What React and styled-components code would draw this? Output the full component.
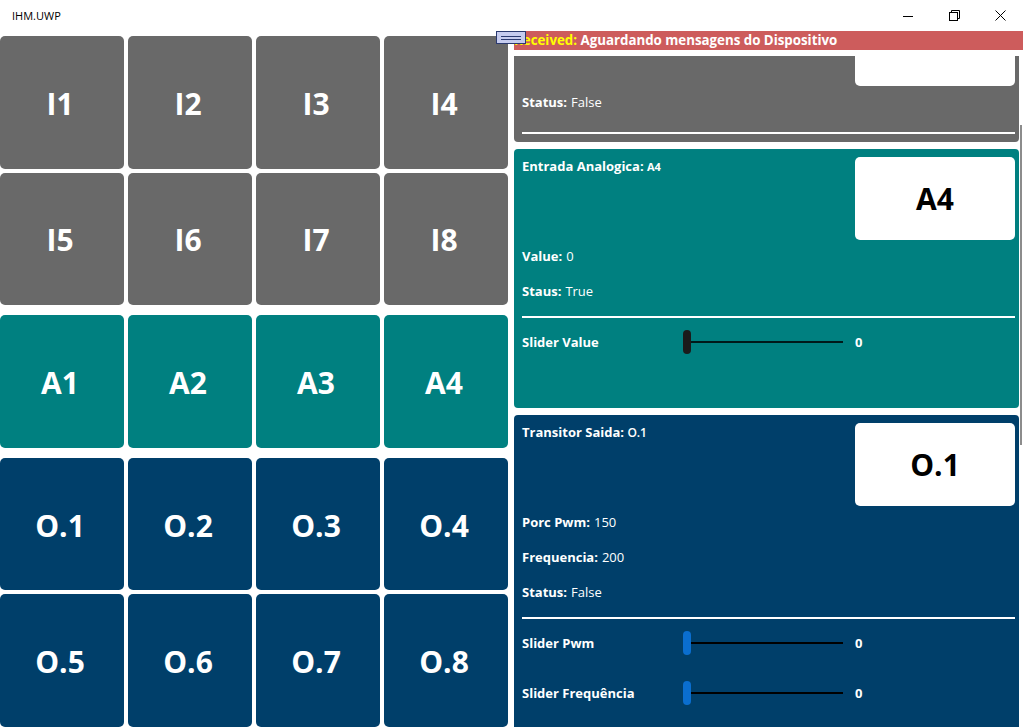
import React, { useLayoutEffect, useRef } from "react";
import styled, { createGlobalStyle } from "styled-components";

const GlobalStyle = createGlobalStyle`
  html, body { margin: 0; padding: 0; background: #ffffff; overflow: hidden; }
  body { font-family: "Open Sans", "Noto Sans", sans-serif; }
  * { box-sizing: border-box; }
`;

const COLORS = {
  gray: "#696969",
  teal: "#008080",
  navy: "#003F6A",
};

const Window = styled.div`
  width: 100vw;
  height: 100vh;
  display: flex;
  flex-direction: column;
  background: #ffffff;
`;

const TitleBar = styled.div`
  height: 31px;
  flex: none;
  display: flex;
  align-items: center;
  justify-content: space-between;
`;

const AppTitle = styled.span`
  font-size: 11px;
  color: #000;
  padding-left: 12px;
`;

const Controls = styled.div`
  display: flex;
  height: 100%;
`;

const ControlButton = styled.div`
  width: 46px;
  height: 100%;
  display: flex;
  align-items: center;
  justify-content: center;
  svg { display: block; }
`;

const Content = styled.div`
  position: relative;
  flex: 1;
  min-height: 0;
  display: flex;
  overflow: hidden;
`;

const TileColumn = styled.div`
  width: 508px;
  flex: none;
  padding-top: 5px;
  display: flex;
  flex-direction: column;
  gap: 10px;
`;

const TileGroup = styled.div`
  display: grid;
  grid-template-columns: repeat(4, 1fr);
  grid-auto-rows: 132.6px;
  gap: 4px;
`;

const Tile = styled.div`
  background: ${(p) => COLORS[p.$tone]};
  border-radius: 5px;
  display: flex;
  align-items: center;
  justify-content: center;
  color: #ffffff;
  font-weight: 700;
  font-size: 30px;
  padding-left: ${(p) => (p.$tone === "gray" ? "0" : "0")};
  margin-left: 0;
`;

const TileLabel = styled.span`
  margin-left: -4px;
  margin-top: 2px;
`;

const Splitter = styled.div`
  position: absolute;
  left: 496px;
  top: 0;
  width: 30px;
  height: 13px;
  background: #c6ccef;
  border: 1px solid #2b3a70;
  display: flex;
  flex-direction: column;
  justify-content: center;
  gap: 2px;
  padding: 0 4px;
  z-index: 5;
`;

const SplitterLine = styled.div`
  height: 1px;
  background: #2b3a70;
`;

const RightPanel = styled.div`
  position: relative;
  flex: 1;
  min-width: 0;
  margin-left: 6px;
  display: flex;
  flex-direction: column;
  gap: 6px;
`;

const ReceivedBar = styled.div`
  height: 19px;
  flex: none;
  background: #cd5c5c;
  color: #ffffff;
  font-weight: 700;
  font-size: 13.3px;
  line-height: 19px;
  white-space: nowrap;
  overflow: hidden;
`;

const ReceivedLabel = styled.span`
  color: #ffff00;
`;

const ScrollArea = styled.div`
  flex: 1;
  min-height: 0;
  overflow: hidden;
  padding-right: 4px;
  display: flex;
  flex-direction: column;
  gap: 7px;
`;

const ScrollThumb = styled.div`
  position: absolute;
  right: 1px;
  top: 94px;
  width: 2px;
  height: 320px;
  background: #8c8c8c;
`;

const Card = styled.div`
  flex: none;
  background: ${(p) => COLORS[p.$tone]};
  border-radius: 4px;
  padding: 8px 4px 8px 8px;
  color: #ffffff;
`;

const CardHeader = styled.div`
  display: flex;
  justify-content: space-between;
  align-items: flex-start;
`;

const CardTitle = styled.div`
  font-size: 13px;
  font-weight: 700;
  line-height: 18px;
`;

const TitleValue = styled.span`
  font-size: ${(p) => (p.$light ? "12px" : "11px")};
  font-weight: ${(p) => (p.$light ? 600 : 700)};
`;

const NameBox = styled.div`
  width: 160px;
  height: 83px;
  background: #ffffff;
  border-radius: 5px;
  display: flex;
  align-items: center;
  justify-content: center;
  color: #000000;
  font-size: 30px;
  font-weight: 700;
`;

const InfoRow = styled.div`
  height: 35px;
  display: flex;
  align-items: center;
  padding-bottom: 4px;
  font-size: 13px;
  gap: 4px;
`;

const Strong = styled.span`
  font-weight: 700;
`;

const Divider = styled.div`
  height: 2px;
  background: #ffffff;
  margin-top: ${(p) => p.$gap}px;
`;

const SliderSection = styled.div`
  padding-bottom: 32px;
`;

const SliderRow = styled.div`
  height: 50px;
  display: grid;
  grid-template-columns: 161px 160px auto;
  align-items: center;
  padding-bottom: 2px;
  font-size: 13px;
  font-weight: 700;
`;

const SliderValue = styled.span`
  margin-left: 12px;
`;

const Slider = styled.div`
  display: flex;
  align-items: center;
  height: 24px;
`;

const Thumb = styled.div`
  width: 8px;
  height: 24px;
  border-radius: 4px;
  background: ${(p) => p.$color};
  flex: none;
`;

const Track = styled.div`
  flex: 1;
  height: 2px;
  background: ${(p) => p.$color};
`;

const inputs = ["I1", "I2", "I3", "I4", "I5", "I6", "I7", "I8"];
const analogs = ["A1", "A2", "A3", "A4"];
const outputs = ["O.1", "O.2", "O.3", "O.4", "O.5", "O.6", "O.7", "O.8"];

function SliderLine({ label, thumb, track }) {
  return (
    <SliderRow>
      <span>{label}</span>
      <Slider>
        <Thumb $color={thumb} />
        <Track $color={track} />
      </Slider>
      <SliderValue>0</SliderValue>
    </SliderRow>
  );
}

export default function App() {
  const scrollRef = useRef(null);
  useLayoutEffect(() => {
    if (scrollRef.current) scrollRef.current.scrollTop = 61;
  }, []);

  return (
    <Window>
      <GlobalStyle />
      <TitleBar>
        <AppTitle>IHM.UWP</AppTitle>
        <Controls>
          <ControlButton>
            <svg width="10" height="10" viewBox="0 0 10 10">
              <line x1="0" y1="5.5" x2="10" y2="5.5" stroke="#000" strokeWidth="1" />
            </svg>
          </ControlButton>
          <ControlButton>
            <svg width="11" height="11" viewBox="0 0 11 11" fill="none" stroke="#000" strokeWidth="1">
              <rect x="0.5" y="2.5" width="8" height="8" />
              <path d="M2.5 2.5 V0.5 H10.5 V8.5 H8.5" />
            </svg>
          </ControlButton>
          <ControlButton>
            <svg width="11" height="11" viewBox="0 0 11 11" stroke="#000" strokeWidth="1">
              <line x1="0.5" y1="0.5" x2="10.5" y2="10.5" />
              <line x1="10.5" y1="0.5" x2="0.5" y2="10.5" />
            </svg>
          </ControlButton>
        </Controls>
      </TitleBar>
      <Content>
        <TileColumn>
          <TileGroup>
            {inputs.map((n) => (
              <Tile key={n} $tone="gray"><TileLabel>{n}</TileLabel></Tile>
            ))}
          </TileGroup>
          <TileGroup>
            {analogs.map((n) => (
              <Tile key={n} $tone="teal"><TileLabel>{n}</TileLabel></Tile>
            ))}
          </TileGroup>
          <TileGroup>
            {outputs.map((n) => (
              <Tile key={n} $tone="navy"><TileLabel>{n}</TileLabel></Tile>
            ))}
          </TileGroup>
        </TileColumn>
        <Splitter>
          <SplitterLine />
          <SplitterLine />
        </Splitter>
        <RightPanel>
          <ReceivedBar>
            <ReceivedLabel>Received:</ReceivedLabel> Aguardando mensagens do Dispositivo
          </ReceivedBar>
          <ScrollArea ref={scrollRef}>
            <Card $tone="gray">
              <CardHeader>
                <CardTitle>
                  Entrada Digital: <TitleValue>I1</TitleValue>
                </CardTitle>
                <NameBox>I1</NameBox>
              </CardHeader>
              <InfoRow>
                <Strong>Status:</Strong> False
              </InfoRow>
              <Divider $gap={11} />
            </Card>
            <Card $tone="teal">
              <CardHeader>
                <CardTitle>
                  Entrada Analogica: <TitleValue>A4</TitleValue>
                </CardTitle>
                <NameBox>A4</NameBox>
              </CardHeader>
              <InfoRow>
                <Strong>Value:</Strong> 0
              </InfoRow>
              <InfoRow>
                <Strong>Staus:</Strong> True
              </InfoRow>
              <Divider $gap={6} />
              <SliderSection>
                <SliderLine label="Slider Value" thumb="#1b1b1b" track="rgba(0,0,0,0.8)" />
              </SliderSection>
            </Card>
            <Card $tone="navy">
              <CardHeader>
                <CardTitle>
                  Transitor Saida: <TitleValue $light>O.1</TitleValue>
                </CardTitle>
                <NameBox>O.1</NameBox>
              </CardHeader>
              <InfoRow>
                <Strong>Porc Pwm:</Strong> 150
              </InfoRow>
              <InfoRow>
                <Strong>Frequencia:</Strong> 200
              </InfoRow>
              <InfoRow>
                <Strong>Status:</Strong> False
              </InfoRow>
              <Divider $gap={6} />
              <SliderSection>
                <SliderLine label="Slider Pwm" thumb="#0a6ecf" track="#000000" />
                <SliderLine label="Slider Frequência" thumb="#0a6ecf" track="#000000" />
              </SliderSection>
            </Card>
          </ScrollArea>
          <ScrollThumb />
        </RightPanel>
      </Content>
    </Window>
  );
}
